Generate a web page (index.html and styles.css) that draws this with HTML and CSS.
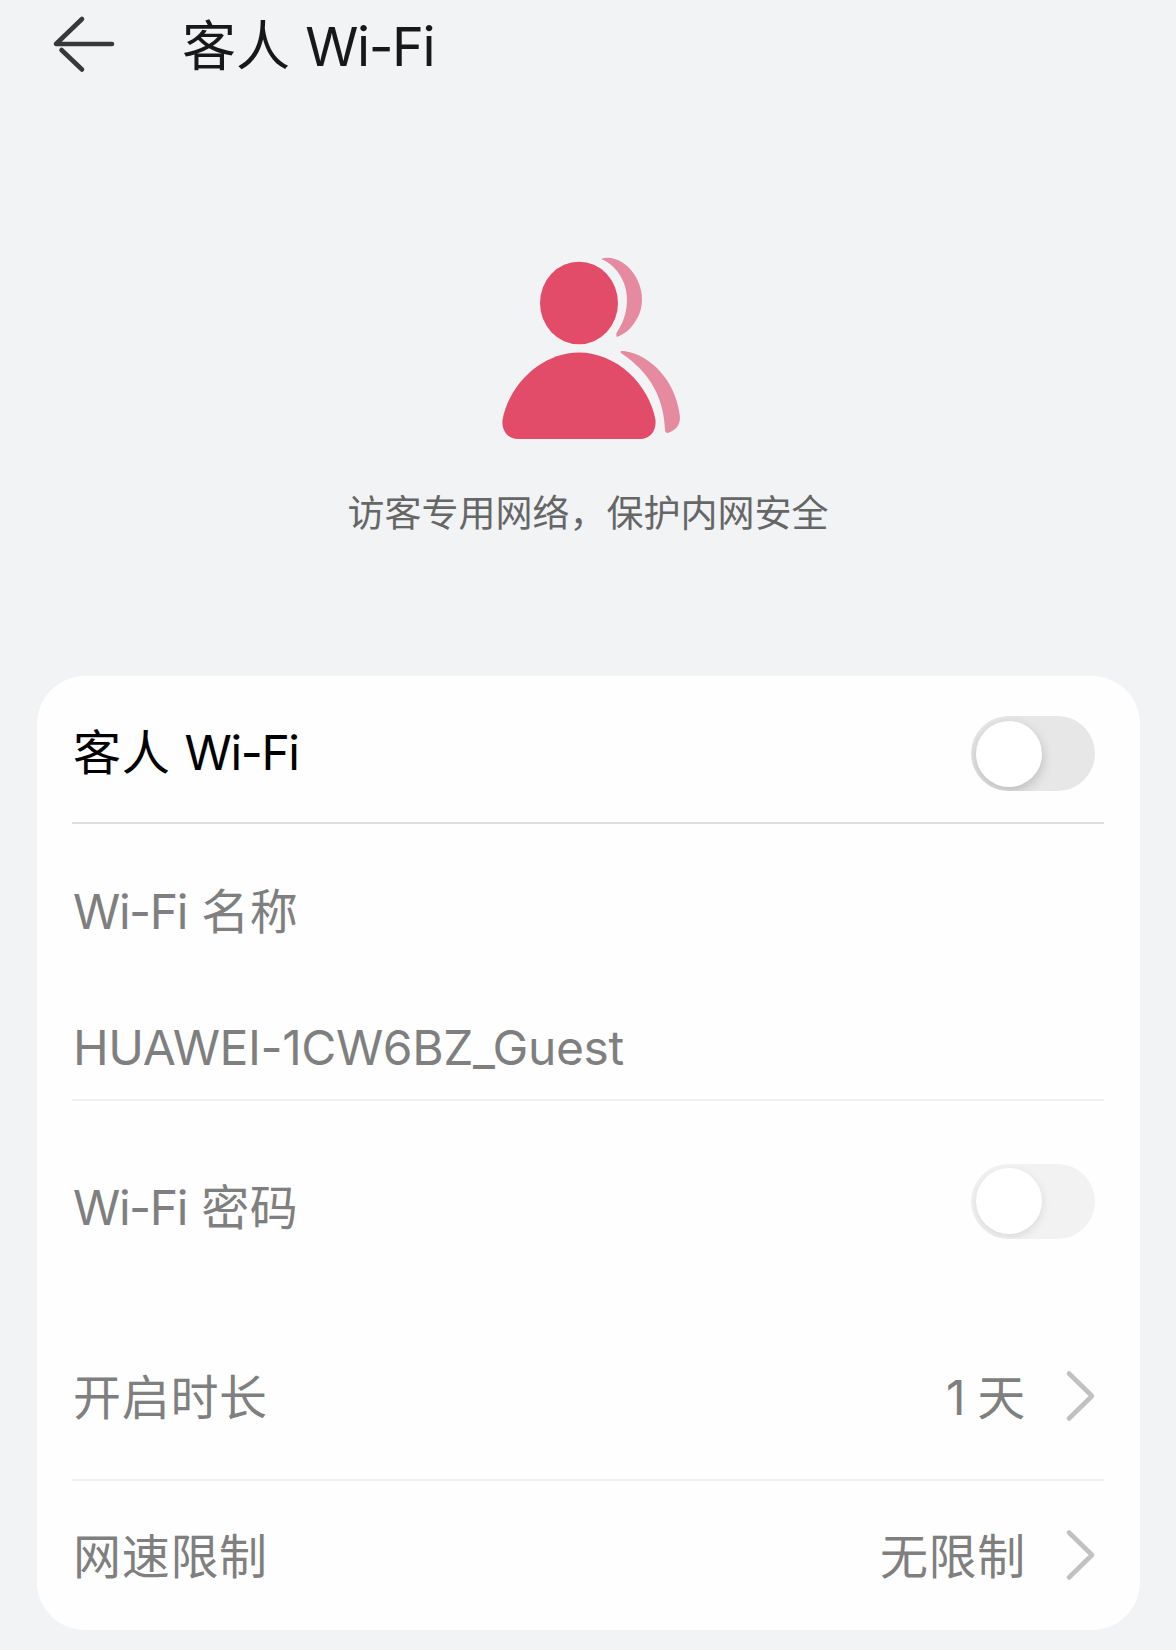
FILE: index.html
```html
<!DOCTYPE html>
<html lang="zh-CN">
<head>
  <meta charset="UTF-8" />
  <meta name="viewport" content="width=device-width, initial-scale=1.0"/>
  <title>客人 Wi-Fi</title>
  <link rel="stylesheet" href="styles.css">
</head>
<body>

<header>
  <svg class="back" width="64" height="60" viewBox="0 0 64 60">
    <path d="M30 5 L4 30 H60 M9.5 36 L30 55.500"/>
  </svg>
  <h1>客人 <span class="latin">Wi-Fi</span></h1>
</header>

<main>
  <section class="hero">
    <svg class="guests" width="220" height="220" viewBox="0 0 220 220">
      <g class="shadow">
        <path d="M121 19 C132 15 146 22 154 34 C164 49 165 68 155 82 C150 90 144 94 137 97 C136 96 136 94 137 92 C149 75 150 52 141 37 C136 28 129 22 121 19 Z"/>
        <path d="M141 113 C139 110 144 111 149 112 C177 119 197 147 200 177 C200 185 196 190 188 193 C186 193 185 192 185 190 C184 159 171 133 141 113 Z"/>
      </g>
      <ellipse cx="99" cy="63" rx="39" ry="41.300"/>
      <path d="M99 112.500 C136 112.500 169 144 175.500 180 C176.500 191 170 199 160 199 H38 C28 199 21.500 191 22.500 180 C29 144 62 112.500 99 112.500 Z"/>
    </svg>
    <p>访客专用网络，保护内网安全</p>
  </section>

  <section class="card">
    <div class="row row-main">
      <span class="label">客人 <span class="latin">Wi-Fi</span></span>
      <span class="switch"></span>
    </div>
    <div class="row-name">
      <span class="label"><span class="latin">Wi-Fi</span> 名称</span>
      <span class="ssid">HUAWEI-1CW6BZ_Guest</span>
    </div>
    <div class="row row-password">
      <span class="label"><span class="latin">Wi-Fi</span> 密码</span>
      <span class="switch disabled"></span>
    </div>
    <div class="row row-time">
      <span class="label">开启时长</span>
      <span class="value">1 天</span>
      <svg class="chevron" width="32" height="56" viewBox="0 0 32 56"><path d="M5 5.500 L28 28 L5 50.500"/></svg>
    </div>
    <div class="row row-speed">
      <span class="label">网速限制</span>
      <span class="value">无限制</span>
      <svg class="chevron" width="32" height="56" viewBox="0 0 32 56"><path d="M5 5.500 L28 28 L5 50.500"/></svg>
    </div>
  </section>
</main>

</body>
</html>
```
FILE: styles.css
```css
* { margin: 0; padding: 0; box-sizing: border-box; }
body {
  font-family: Inter, 'Noto Sans CJK SC', sans-serif;
  background: #f1f3f5;
  color: #7f7f7f;
  min-height: 1650px;
}

header {
  display: flex;
  align-items: center;
  height: 88px;
  padding-left: 52px;
}
header h1 {
  margin-left: 66px;
  padding-top: 5px;
  font-size: 54px;
  font-weight: 400;
  line-height: 66px;
  color: #17181a;
}
.back {
  fill: none;
  stroke: #36383a;
  stroke-width: 4.6;
  stroke-linecap: round;
  stroke-linejoin: round;
}

/* Icône des invités */
.hero {
  display: flex;
  flex-direction: column;
  align-items: center;
  height: 588px;
  padding-top: 152px;
}
.guests {
  display: block;
  margin-left: 4px;
  fill: #e24c69;
}
.guests .shadow {
  fill: #e68a9f;
}
.hero p {
  margin-top: 28px;
  font-size: 37px;
  line-height: 52px;
  color: #666;
}

.card {
  height: 954px;
  margin: 0 36px 0 37px;
  padding: 0 36px 0 35px;
  background: #fefefe;
  border-radius: 48px;
}
.row {
  display: flex;
  align-items: center;
  padding-right: 9px;
}
.label, .value, .ssid {
  font-size: 48px;
  line-height: 60px;
  white-space: nowrap;
}
.label {
  margin-right: auto;
  padding-left: 1px;
  letter-spacing: 0.7px;
}
.latin {
  letter-spacing: -1.4px;
}

.row-main {
  height: 148px;
  padding-top: 9px;
  border-bottom: 2px solid #dfdfdf;
}
.row-main .label {
  padding-bottom: 2px;
  color: #000;
}
.row-name {
  display: flex;
  flex-direction: column;
  gap: 76px;
  height: 277px;
  padding-top: 58px;
  border-bottom: 2px solid #f1f1f1;
}
.ssid {
  padding-left: 1px;
  letter-spacing: -0.4px;
}
.row-password {
  height: 211px;
  padding-bottom: 11px;
}
.row-password .label {
  padding-top: 13px;
}
.row-time {
  height: 169px;
  border-bottom: 2px solid #efefef;
}
.row-speed {
  height: 147px;
}
.row-time .label, .row-speed .label,
.value {
  padding-top: 4px;
}

.value {
  margin-right: 38px;
  letter-spacing: 0.7px;
  word-spacing: -3px;
}
.chevron {
  margin-right: -1px;
  fill: none;
  stroke: #c1c1c1;
  stroke-width: 4.6;
  stroke-linecap: round;
  stroke-linejoin: round;
}

.switch {
  display: flex;
  align-items: center;
  width: 124px;
  height: 75px;
  padding-left: 5px;
  border-radius: 38px;
  background: #e7e7e8;
  overflow: hidden;
}
.switch::before {
  content: "";
  width: 66px;
  height: 66px;
  border-radius: 50%;
  background: #fff;
  box-shadow: 0 4px 12px rgba(0,0,0,0.2);
}
.switch.disabled {
  background: #f2f2f2;
}
.switch.disabled::before {
  box-shadow: 0 3px 10px rgba(0,0,0,0.1);
}
```
